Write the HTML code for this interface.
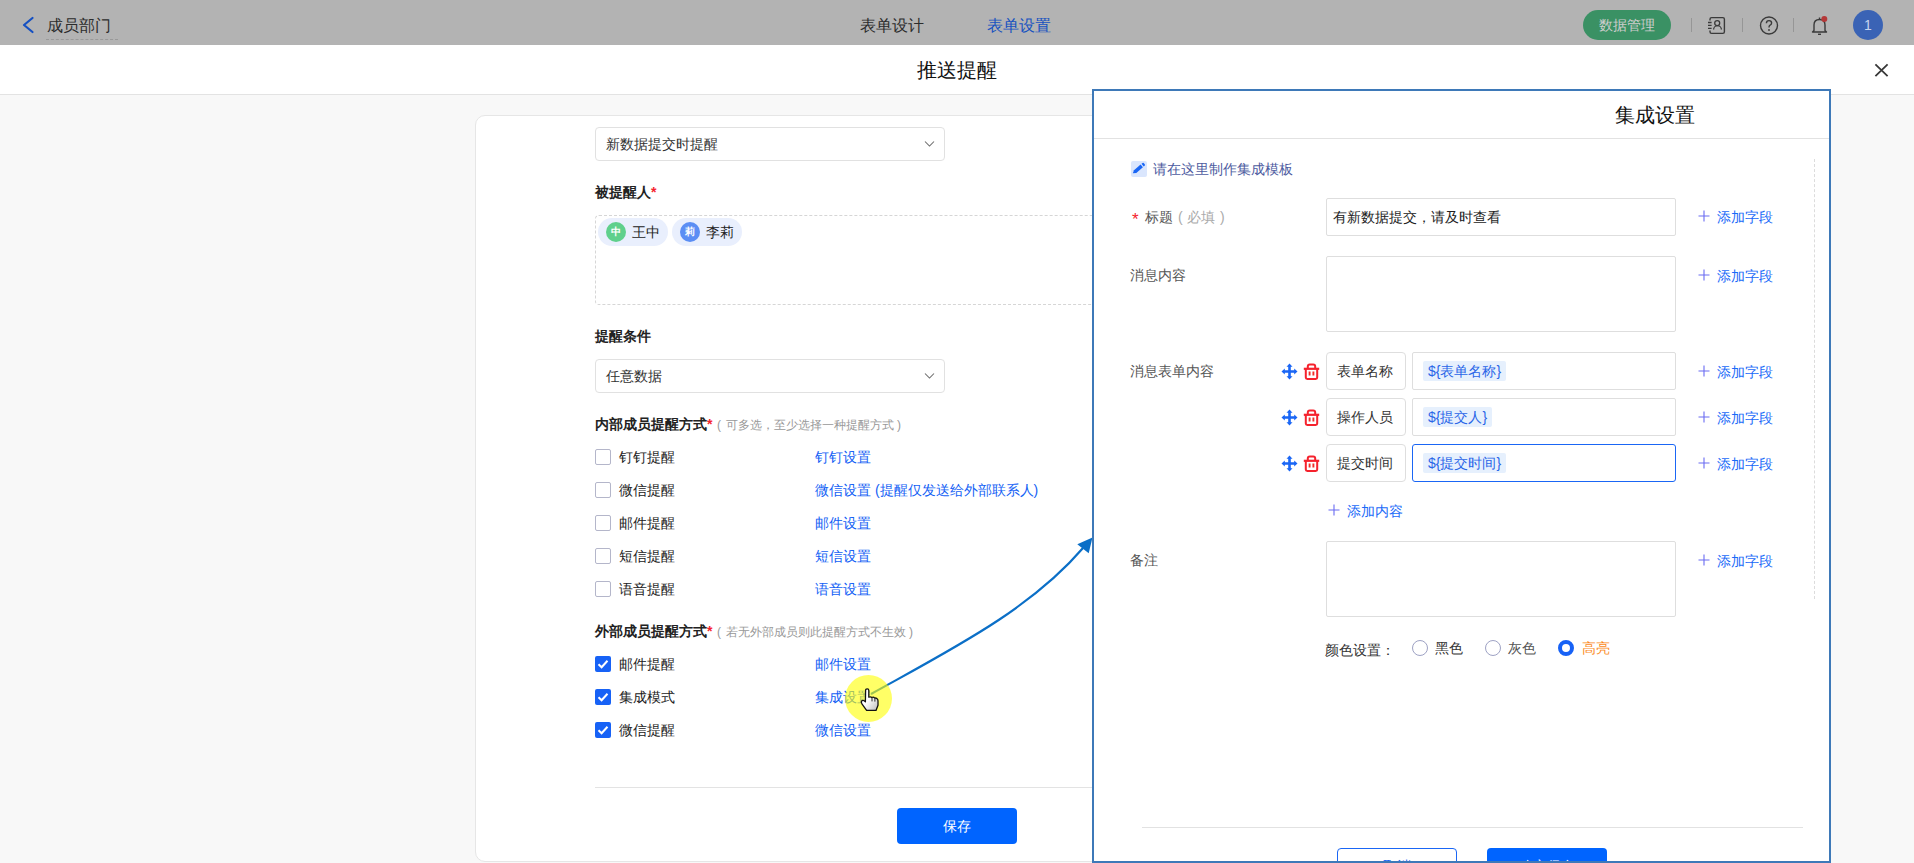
<!DOCTYPE html>
<html><head><meta charset="utf-8">
<style>
*{box-sizing:border-box;margin:0;padding:0}
html,body{width:1914px;height:863px;overflow:hidden;background:#f8f8f8;font-family:"Liberation Sans",sans-serif;color:#222}
.a{position:absolute}
.t14{font-size:14px;line-height:20px;white-space:nowrap}
.t12{font-size:12px;line-height:20px;white-space:nowrap}
.hdr{left:0;top:0;width:1914px;height:45px;background:#b3b3b3}
.mt{left:0;top:45px;width:1914px;height:50px;background:#fff;border-bottom:1px solid #e3e3e3}
.card{left:475px;top:115px;width:965px;height:747px;background:#fff;border:1px solid #e6e6e6;border-radius:10px}
.sel{height:34px;width:350px;border:1px solid #e1e1e1;border-radius:4px;background:#fff;padding-left:10px;font-size:14px;line-height:32px;color:#333}
.lbl{font-weight:bold;color:#222}
.req{color:#f5222d}
.cb{width:16px;height:16px;border:1px solid #b4b6ca;border-radius:2px;background:#fff}
.cbon{width:16px;height:16px;border-radius:2px;background:#1762f6}
.lk{color:#135ff5}
.panel{left:1092px;top:89px;width:739px;height:774px;border:2px solid #3e79b8;background:#fff}
.box{border:1px solid #dedede;border-radius:2px;background:#fff}
.fl{color:#555}
.add{color:#1a6af8}
.tag{height:20px;background:#e6f0fd;border-radius:2px;color:#2a66e8;font-size:14px;line-height:20px;padding:0 5px;white-space:nowrap}
</style></head><body>

<!-- top header (masked) -->
<div class="a hdr"></div>
<svg class="a" style="left:20px;top:15px" width="16" height="20" viewBox="0 0 16 20"><path d="M12.5 3 L4 10 L12.5 17" fill="none" stroke="#1550c2" stroke-width="2.2" stroke-linecap="round" stroke-linejoin="round"/></svg>
<div class="a" style="left:47px;top:16px;font-size:16px;line-height:20px;color:#2c2c2c">成员部门</div>
<div class="a" style="left:46px;top:39px;width:72px;border-top:1px dashed #999"></div>
<div class="a" style="left:860px;top:16px;font-size:16px;line-height:20px;color:#2c2c2c">表单设计</div>
<div class="a" style="left:987px;top:16px;font-size:16px;line-height:20px;color:#1752c0">表单设置</div>
<div class="a" style="left:1583px;top:10px;width:88px;height:30px;border-radius:15px;background:#3a9164;color:#cdcdcd;font-size:14px;line-height:30px;text-align:center">数据管理</div>
<div class="a" style="left:1691px;top:18px;width:1px;height:14px;background:#969696"></div>
<svg class="a" style="left:1706px;top:16px" width="20" height="19" viewBox="0 0 20 19"><path d="M4 4.6 V3.2 Q4 1.6 5.6 1.6 H16.8 Q18.4 1.6 18.4 3.2 V15.8 Q18.4 17.4 16.8 17.4 H5.6 Q4 17.4 4 15.8 V14.4" fill="none" stroke="#3a3a3a" stroke-width="1.4"/><path d="M2 6.5h3.6M2 9.4h3.6M2 12.3h3.6" stroke="#3a3a3a" stroke-width="1.3"/><circle cx="11.2" cy="7.1" r="2.5" fill="none" stroke="#3a3a3a" stroke-width="1.3"/><path d="M7.6 13.6 A3.9 3.9 0 0 1 15.4 13.6" fill="none" stroke="#3a3a3a" stroke-width="1.3"/></svg>
<div class="a" style="left:1742px;top:18px;width:1px;height:14px;background:#969696"></div>
<svg class="a" style="left:1759px;top:16px" width="20" height="19" viewBox="0 0 20 19"><circle cx="10" cy="9.5" r="8.5" fill="none" stroke="#3a3a3a" stroke-width="1.4"/><path d="M7.4 7.3 Q7.4 4.6 10 4.6 Q12.6 4.6 12.6 7 Q12.6 8.6 10.8 9.4 Q10 9.8 10 11.4" fill="none" stroke="#3a3a3a" stroke-width="1.4"/><circle cx="10" cy="14" r="0.9" fill="#3a3a3a"/></svg>
<div class="a" style="left:1793px;top:18px;width:1px;height:14px;background:#969696"></div>
<svg class="a" style="left:1810px;top:15px" width="20" height="21" viewBox="0 0 20 21"><path d="M4 15.5 V10 Q4 4.5 9.5 4.5 Q15 4.5 15 10 V15.5 L16.5 17 H2.5 Z" fill="none" stroke="#3a3a3a" stroke-width="1.4" stroke-linejoin="round"/><path d="M8 19.3h3" stroke="#3a3a3a" stroke-width="1.4"/><path d="M9.5 2.5v1.5" stroke="#3a3a3a" stroke-width="1.4"/><circle cx="14.3" cy="4" r="3" fill="#b53838"/></svg>
<div class="a" style="left:1853px;top:10px;width:30px;height:30px;border-radius:15px;background:#3a63b5;color:#c6d4ee;font-size:14px;line-height:30px;text-align:center">1</div>

<!-- modal title -->
<div class="a mt"></div>
<div class="a" style="left:917px;top:60px;font-size:20px;line-height:20px;color:#111">推送提醒</div>
<svg class="a" style="left:1873px;top:62px" width="16" height="16" viewBox="0 0 16 16"><path d="M2.4 2.3L14.6 14.1M14.6 2.3L2.4 14.1" stroke="#383838" stroke-width="1.8"/></svg>

<!-- card -->
<div class="a card"></div>
<div class="a sel" style="left:595px;top:127px">新数据提交时提醒</div>
<svg class="a" style="left:924px;top:140px" width="11" height="8" viewBox="0 0 11 8"><path d="M1 1.5L5.5 6L10 1.5" fill="none" stroke="#6a6a6a" stroke-width="1.05"/></svg>

<div class="a t14 lbl" style="left:595px;top:182px">被提醒人<span class="req">*</span></div>
<div class="a" style="left:595px;top:215px;width:600px;height:90px;border:1px dashed #d6d6d6;border-radius:4px"></div>
<div class="a" style="left:598px;top:218px;width:70px;height:28px;border-radius:14px;background:#e9effd"></div>
<div class="a" style="left:606px;top:222px;width:20px;height:20px;border-radius:10px;background:#5fd08c;color:#fff;font-size:10px;line-height:20px;text-align:center;font-weight:bold">中</div>
<div class="a t14" style="left:632px;top:222px;color:#222">王中</div>
<div class="a" style="left:672px;top:218px;width:70px;height:28px;border-radius:14px;background:#e9effd"></div>
<div class="a" style="left:680px;top:222px;width:20px;height:20px;border-radius:10px;background:#5b8ef4;color:#fff;font-size:10px;line-height:20px;text-align:center;font-weight:bold">莉</div>
<div class="a t14" style="left:706px;top:222px;color:#222">李莉</div>

<div class="a t14 lbl" style="left:595px;top:326px">提醒条件</div>
<div class="a sel" style="left:595px;top:359px">任意数据</div>
<svg class="a" style="left:924px;top:372px" width="11" height="8" viewBox="0 0 11 8"><path d="M1 1.5L5.5 6L10 1.5" fill="none" stroke="#6a6a6a" stroke-width="1.05"/></svg>

<div class="a t14 lbl" style="left:595px;top:414px">内部成员提醒方式<span class="req">*</span></div>
<div class="a t12" style="left:717px;top:415px;color:#999">(</div><div class="a t12" style="left:726px;top:415px;color:#999">可多选，至少选择一种提醒方式</div><div class="a t12" style="left:897px;top:415px;color:#999">)</div>

<div class="a cb" style="left:595px;top:449px"></div><div class="a t14" style="left:619px;top:447px">钉钉提醒</div><div class="a t14 lk" style="left:815px;top:447px">钉钉设置</div>
<div class="a cb" style="left:595px;top:482px"></div><div class="a t14" style="left:619px;top:480px">微信提醒</div><div class="a t14 lk" style="left:815px;top:480px">微信设置 (提醒仅发送给外部联系人)</div>
<div class="a cb" style="left:595px;top:515px"></div><div class="a t14" style="left:619px;top:513px">邮件提醒</div><div class="a t14 lk" style="left:815px;top:513px">邮件设置</div>
<div class="a cb" style="left:595px;top:548px"></div><div class="a t14" style="left:619px;top:546px">短信提醒</div><div class="a t14 lk" style="left:815px;top:546px">短信设置</div>
<div class="a cb" style="left:595px;top:581px"></div><div class="a t14" style="left:619px;top:579px">语音提醒</div><div class="a t14 lk" style="left:815px;top:579px">语音设置</div>

<div class="a t14 lbl" style="left:595px;top:621px">外部成员提醒方式<span class="req">*</span></div>
<div class="a t12" style="left:717px;top:622px;color:#999">(</div><div class="a t12" style="left:726px;top:622px;color:#999">若无外部成员则此提醒方式不生效</div><div class="a t12" style="left:909px;top:622px;color:#999">)</div>

<div class="a cbon" style="left:595px;top:656px"><svg width="16" height="16" viewBox="0 0 16 16"><path d="M3.5 8.2L6.6 11.2L12.5 4.8" fill="none" stroke="#fff" stroke-width="2"/></svg></div><div class="a t14" style="left:619px;top:654px">邮件提醒</div><div class="a t14 lk" style="left:815px;top:654px">邮件设置</div>
<div class="a cbon" style="left:595px;top:689px"><svg width="16" height="16" viewBox="0 0 16 16"><path d="M3.5 8.2L6.6 11.2L12.5 4.8" fill="none" stroke="#fff" stroke-width="2"/></svg></div><div class="a t14" style="left:619px;top:687px">集成模式</div><div class="a t14 lk" style="left:815px;top:687px">集成设置</div>
<div class="a cbon" style="left:595px;top:722px"><svg width="16" height="16" viewBox="0 0 16 16"><path d="M3.5 8.2L6.6 11.2L12.5 4.8" fill="none" stroke="#fff" stroke-width="2"/></svg></div><div class="a t14" style="left:619px;top:720px">微信提醒</div><div class="a t14 lk" style="left:815px;top:720px">微信设置</div>

<div class="a" style="left:595px;top:787px;width:600px;height:1px;background:#e3e3e3"></div>
<div class="a" style="left:897px;top:808px;width:120px;height:36px;border-radius:4px;background:#0064ff;color:#fff;font-size:14px;line-height:36px;text-align:center">保存</div>

<!-- arrow -->
<svg class="a" style="left:0;top:0" width="1914" height="863" viewBox="0 0 1914 863">
<path d="M871 694 C950 650 1030 610 1083 548" fill="none" stroke="#0b6fc7" stroke-width="2.2"/>
<path d="M1092.5 537.5 L1077.3 544.3 L1088.7 553.3 Z" fill="#0b6fc7"/>
</svg>
<div class="a" style="left:845px;top:675px;width:47px;height:47px;border-radius:50%;background:rgba(255,255,0,0.6)"></div>
<svg class="a" style="left:860px;top:688px" width="20" height="24" viewBox="0 0 20 24"><defs><linearGradient id="hg" x1="0" y1="0" x2="1" y2="1"><stop offset="0.45" stop-color="#fff"/><stop offset="1" stop-color="#bdbdbd"/></linearGradient></defs><path d="M5.6 2.5 Q5.6 0.9 7.2 0.9 Q8.8 0.9 8.8 2.5 V9.2 Q10.5 8.3 11.9 9.5 Q13.5 8.7 14.8 10.1 Q16.5 9.6 17.6 11.3 Q18 12.1 18 13.5 V17.2 L16 22.4 H6.6 L2.1 16.2 Q1 14.3 1.5 13.2 Q2.5 11.8 4.2 12.7 L5.4 13.9 Z" fill="url(#hg)" stroke="#111" stroke-width="1.3" stroke-linejoin="round"/><path d="M12 9.8v3.6M14.9 10.4v3.2" stroke="#111" stroke-width="0.9"/></svg>

<!-- panel -->
<div class="a panel"></div>
<div class="a" style="left:1094px;top:138px;width:735px;height:1px;background:#e2e2e2"></div>
<div class="a" style="left:1615px;top:105px;font-size:20px;line-height:20px;color:#111">集成设置</div>
<div class="a" style="left:1814px;top:159px;width:0;height:440px;border-left:1px dashed #dcdcdc"></div>

<div class="a" style="left:1131px;top:161px;width:16px;height:16px;border-radius:2px;background:#dae6fd"><svg width="16" height="16" viewBox="0 0 16 16"><path d="M1.8 12.2 L3 9.2 L9.6 3.6 L11.9 6.3 L5.3 11.9 Z" fill="#1a66f5"/><path d="M10.5 2.8 L11.6 1.9 Q12.2 1.5 12.7 2 L13.9 3.5 Q14.2 4 13.8 4.4 L12.7 5.4 Z" fill="#1a66f5"/></svg></div>
<div class="a t14" style="left:1153px;top:159px;color:#4d5ba0">请在这里制作集成模板</div>

<div class="a" style="left:1132px;top:210px;font-size:17px;line-height:20px;color:#f5222d">*</div><div class="a t14" style="left:1145px;top:207px;color:#555">标题</div><div class="a t14" style="left:1178px;top:207px;color:#aaa">(</div><div class="a t14" style="left:1187px;top:207px;color:#aaa">必填</div><div class="a t14" style="left:1220px;top:207px;color:#aaa">)</div>
<div class="a box t14" style="left:1326px;top:198px;width:350px;height:38px;line-height:36px;padding-left:6px;color:#222">有新数据提交，请及时查看</div>

<div class="a t14 fl" style="left:1130px;top:265px">消息内容</div>
<div class="a box" style="left:1326px;top:256px;width:350px;height:76px"></div>

<div class="a t14 fl" style="left:1130px;top:361px">消息表单内容</div>

<!-- rows -->
<svg class="a" style="left:1281px;top:363px" width="17" height="17" viewBox="0 0 17 17"><path d="M8.5 0.5 L11.5 3.8 H9.8 V7.2 H13.2 V5.5 L16.5 8.5 L13.2 11.5 V9.8 H9.8 V13.2 H11.5 L8.5 16.5 L5.5 13.2 H7.2 V9.8 H3.8 V11.5 L0.5 8.5 L3.8 5.5 V7.2 H7.2 V3.8 H5.5 Z" fill="#1a66f5"/></svg>
<svg class="a" style="left:1303px;top:363px" width="17" height="18" viewBox="0 0 17 18"><path d="M4.8 5 V3.5 Q4.8 1.5 6.8 1.5 H10.2 Q12.2 1.5 12.2 3.5 V5" fill="none" stroke="#f5222d" stroke-width="2"/><path d="M0.8 5.8 H16.2" stroke="#f5222d" stroke-width="2.2"/><path d="M2.8 6 V14.6 Q2.8 16 4.3 16 H12.7 Q14.2 16 14.2 14.6 V6" fill="none" stroke="#f5222d" stroke-width="2"/><path d="M6.6 8.4 V12.6M10.4 8.4 V12.6" stroke="#f0302a" stroke-width="1.9"/></svg>
<div class="a box t14" style="left:1326px;top:352px;width:80px;height:38px;line-height:36px;padding-left:10px;border-radius:4px;color:#333">表单名称</div>
<div class="a box" style="left:1412px;top:352px;width:264px;height:38px"><div class="a tag" style="left:10px;top:8px">${表单名称}</div></div>

<svg class="a" style="left:1281px;top:409px" width="17" height="17" viewBox="0 0 17 17"><path d="M8.5 0.5 L11.5 3.8 H9.8 V7.2 H13.2 V5.5 L16.5 8.5 L13.2 11.5 V9.8 H9.8 V13.2 H11.5 L8.5 16.5 L5.5 13.2 H7.2 V9.8 H3.8 V11.5 L0.5 8.5 L3.8 5.5 V7.2 H7.2 V3.8 H5.5 Z" fill="#1a66f5"/></svg>
<svg class="a" style="left:1303px;top:409px" width="17" height="18" viewBox="0 0 17 18"><path d="M4.8 5 V3.5 Q4.8 1.5 6.8 1.5 H10.2 Q12.2 1.5 12.2 3.5 V5" fill="none" stroke="#f5222d" stroke-width="2"/><path d="M0.8 5.8 H16.2" stroke="#f5222d" stroke-width="2.2"/><path d="M2.8 6 V14.6 Q2.8 16 4.3 16 H12.7 Q14.2 16 14.2 14.6 V6" fill="none" stroke="#f5222d" stroke-width="2"/><path d="M6.6 8.4 V12.6M10.4 8.4 V12.6" stroke="#f0302a" stroke-width="1.9"/></svg>
<div class="a box t14" style="left:1326px;top:398px;width:80px;height:38px;line-height:36px;padding-left:10px;border-radius:4px;color:#333">操作人员</div>
<div class="a box" style="left:1412px;top:398px;width:264px;height:38px"><div class="a tag" style="left:10px;top:8px">${提交人}</div></div>

<svg class="a" style="left:1281px;top:455px" width="17" height="17" viewBox="0 0 17 17"><path d="M8.5 0.5 L11.5 3.8 H9.8 V7.2 H13.2 V5.5 L16.5 8.5 L13.2 11.5 V9.8 H9.8 V13.2 H11.5 L8.5 16.5 L5.5 13.2 H7.2 V9.8 H3.8 V11.5 L0.5 8.5 L3.8 5.5 V7.2 H7.2 V3.8 H5.5 Z" fill="#1a66f5"/></svg>
<svg class="a" style="left:1303px;top:455px" width="17" height="18" viewBox="0 0 17 18"><path d="M4.8 5 V3.5 Q4.8 1.5 6.8 1.5 H10.2 Q12.2 1.5 12.2 3.5 V5" fill="none" stroke="#f5222d" stroke-width="2"/><path d="M0.8 5.8 H16.2" stroke="#f5222d" stroke-width="2.2"/><path d="M2.8 6 V14.6 Q2.8 16 4.3 16 H12.7 Q14.2 16 14.2 14.6 V6" fill="none" stroke="#f5222d" stroke-width="2"/><path d="M6.6 8.4 V12.6M10.4 8.4 V12.6" stroke="#f0302a" stroke-width="1.9"/></svg>
<div class="a box t14" style="left:1326px;top:444px;width:80px;height:38px;line-height:36px;padding-left:10px;border-radius:4px;color:#333">提交时间</div>
<div class="a" style="left:1412px;top:444px;width:264px;height:38px;border:1px solid #1a66f5;border-radius:3px;background:#fff"><div class="a tag" style="left:10px;top:8px">${提交时间}</div></div>

<div class="a t14 add" style="left:1327px;top:501px"><svg width="12" height="12" viewBox="0 0 12 12" style="vertical-align:0px;margin-left:1px;margin-right:7px"><path d="M6 0.5v11M0.5 6h11" stroke="#6a6cf2" stroke-width="1.1"/></svg>添加内容</div>

<div class="a t14 fl" style="left:1130px;top:550px">备注</div>
<div class="a box" style="left:1326px;top:541px;width:350px;height:76px"></div>

<!-- add field links -->
<div class="a t14 add" style="left:1697px;top:207px"><svg width="12" height="12" viewBox="0 0 12 12" style="vertical-align:0px;margin-left:1px;margin-right:7px"><path d="M6 0.5v11M0.5 6h11" stroke="#6a6cf2" stroke-width="1.1"/></svg>添加字段</div>
<div class="a t14 add" style="left:1697px;top:266px"><svg width="12" height="12" viewBox="0 0 12 12" style="vertical-align:0px;margin-left:1px;margin-right:7px"><path d="M6 0.5v11M0.5 6h11" stroke="#6a6cf2" stroke-width="1.1"/></svg>添加字段</div>
<div class="a t14 add" style="left:1697px;top:362px"><svg width="12" height="12" viewBox="0 0 12 12" style="vertical-align:0px;margin-left:1px;margin-right:7px"><path d="M6 0.5v11M0.5 6h11" stroke="#6a6cf2" stroke-width="1.1"/></svg>添加字段</div>
<div class="a t14 add" style="left:1697px;top:408px"><svg width="12" height="12" viewBox="0 0 12 12" style="vertical-align:0px;margin-left:1px;margin-right:7px"><path d="M6 0.5v11M0.5 6h11" stroke="#6a6cf2" stroke-width="1.1"/></svg>添加字段</div>
<div class="a t14 add" style="left:1697px;top:454px"><svg width="12" height="12" viewBox="0 0 12 12" style="vertical-align:0px;margin-left:1px;margin-right:7px"><path d="M6 0.5v11M0.5 6h11" stroke="#6a6cf2" stroke-width="1.1"/></svg>添加字段</div>
<div class="a t14 add" style="left:1697px;top:551px"><svg width="12" height="12" viewBox="0 0 12 12" style="vertical-align:0px;margin-left:1px;margin-right:7px"><path d="M6 0.5v11M0.5 6h11" stroke="#6a6cf2" stroke-width="1.1"/></svg>添加字段</div>

<!-- color radios -->
<div class="a t14" style="left:1325px;top:640px;color:#333">颜色设置：</div>
<div class="a" style="left:1412px;top:640px;width:16px;height:16px;border:1px solid #9ea2c4;border-radius:50%;background:#fff"></div>
<div class="a t14" style="left:1435px;top:638px;color:#333">黑色</div>
<div class="a" style="left:1485px;top:640px;width:16px;height:16px;border:1px solid #9ea2c4;border-radius:50%;background:#fff"></div>
<div class="a t14" style="left:1508px;top:638px;color:#555">灰色</div>
<div class="a" style="left:1558px;top:640px;width:16px;height:16px;border:4.5px solid #1762f6;border-radius:50%;background:#fff"></div>
<div class="a t14" style="left:1582px;top:638px;color:#fb8a1c">高亮</div>

<div class="a" style="left:1142px;top:827px;width:661px;height:1px;background:#e2e2e2"></div>
<div class="a" style="left:1337px;top:848px;width:120px;height:36px;border:1px solid #1a66f5;border-radius:4px;background:#fff;color:#1a66f5;font-size:14px;line-height:34px;text-align:center">取消</div>
<div class="a" style="left:1487px;top:848px;width:120px;height:36px;border-radius:4px;background:#0064ff;color:#fff;font-size:14px;line-height:36px;text-align:center">确定保存</div>
<div class="a" style="left:1092px;top:861px;width:739px;height:2px;background:#3e79b8"></div>

</body></html>
